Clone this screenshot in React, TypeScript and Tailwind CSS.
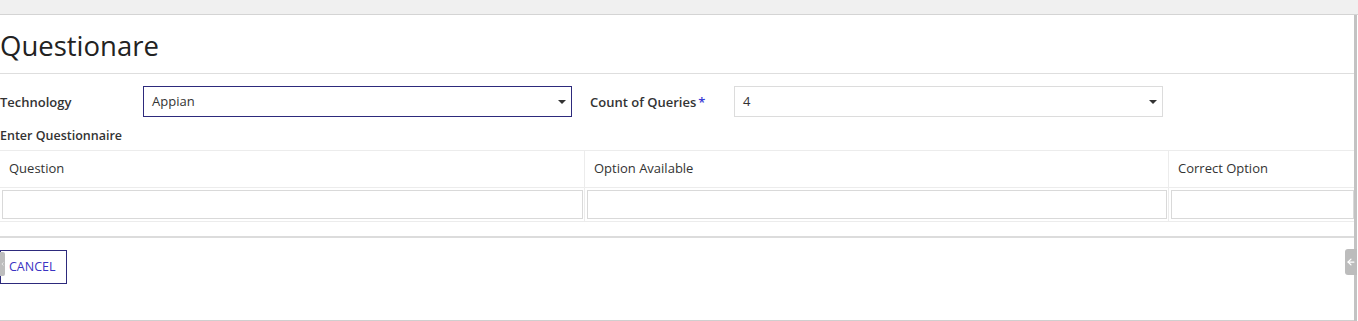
import { ChevronLeft, ArrowLeft } from "lucide-react";

function Caret() {
  return (
    <svg width="8" height="4" viewBox="0 0 8 4" aria-hidden="true">
      <path d="M0 0h8L4 4z" fill="#333" />
    </svg>
  );
}

function Select({ value, active }: { value: string; active?: boolean }) {
  return (
    <div
      className={
        "flex h-[31px] items-center justify-between border bg-white pl-[8px] pr-[5px] pt-[1px] text-[13px] text-[#333] " +
        (active ? "border-[#2d2a7c]" : "border-[#dcdcdc]")
      }
    >
      <span>{value}</span>
      <Caret />
    </div>
  );
}

const columns = [
  { title: "Question", width: "w-[584px]" },
  { title: "Option Available", width: "w-[584px]" },
  { title: "Correct Option", width: "flex-1" },
];

export default function App() {
  return (
    <div
      className="relative h-[321px] w-[1358px] overflow-hidden bg-white text-[#333]"
      style={{ fontFamily: '"Open Sans", "Noto Sans", sans-serif' }}
    >
      <div className="h-[15px] border-b border-[#d4d4d4] bg-[#f0f0f0]" />
      <div className="flex h-[306px]">
        <div className="flex w-[1354px] flex-col">
          <div className="flex h-[59px] items-center border-b border-[#dedede] pt-[4px]">
            <h1 className="text-[27.5px] leading-none text-[#222]">Questionare</h1>
          </div>

          <div className="flex items-center pt-[12px]">
            <label className="w-[143px] pt-[2px] text-[13px] font-semibold">Technology</label>
            <div className="w-[429px]">
              <Select value="Appian" active />
            </div>
            <label className="ml-[18px] w-[144px] pt-[2px] text-[13px] font-semibold">
              Count of Queries<span className="ml-[2px] text-[#3b3bd6]">*</span>
            </label>
            <div className="w-[429px]">
              <Select value="4" />
            </div>
          </div>

          <div className="mt-[10px] text-[12.5px] font-semibold leading-[17px]">Enter Questionnaire</div>

          <div className="mt-[6px] border-t border-[#ececec]">
            <div className="flex h-[37px] border-b border-[#ececec]">
              {columns.map((c, i) => (
                <div
                  key={c.title}
                  className={
                    c.width +
                    " flex items-center pl-[9px] text-[13px] text-[#333] " +
                    (i > 0 ? "border-l border-[#ececec]" : "")
                  }
                >
                  {c.title}
                </div>
              ))}
            </div>
            <div className="flex h-[34px] border-b border-[#ececec]">
              {columns.map((c, i) => (
                <div
                  key={c.title}
                  className={
                    c.width +
                    " py-[2px] pl-[2px] " +
                    (i < 2 ? "pr-[1px] " : "pr-0 ") +
                    (i > 0 ? "border-l border-[#ececec]" : "")
                  }
                >
                  <input className="h-full w-full border border-[#d9d9d9] bg-white outline-none" />
                </div>
              ))}
            </div>
          </div>

          <div className="mt-[14px] border-t-2 border-[#dcdcdc]" />

          <div className="pt-[12px]">
            <button
              type="button"
              className="flex h-[34px] w-[67px] items-center border border-[#2d2a7c] bg-white pl-[8px] text-[12.5px] text-[#3a33c2]"
            >
              CANCEL
            </button>
          </div>

          <div className="mt-auto border-b border-[#cfcfcf]" />
        </div>
        <div className="w-[3px] bg-[#c3c3c3]" />
        <div className="flex-1" />
      </div>

      <div className="absolute left-0 top-[252px] flex h-[24px] w-[5px] items-center justify-center rounded-r-[2px] bg-[#bdbdbd]">
        <ChevronLeft size={6} color="#fff" strokeWidth={3} />
      </div>
      <div className="absolute left-[1345px] top-[249px] flex h-[26px] w-[12px] items-center justify-center rounded-l-[3px] bg-[#bcbcbc]">
        <ArrowLeft size={10} color="#fff" strokeWidth={3} />
      </div>
    </div>
  );
}
